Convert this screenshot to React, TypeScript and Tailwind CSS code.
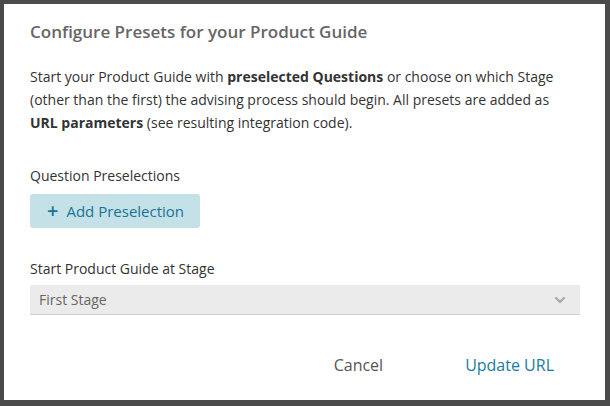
import { ChevronDown } from "lucide-react";

export default function App() {
  return (
    <div
      className="h-[406px] w-[610px] bg-[#4b4b4b] p-1"
      style={{ fontFamily: '"Open Sans", "Liberation Sans", sans-serif' }}
    >
      <div className="flex h-[396px] w-[601px] flex-col bg-white px-[26px]">
        {/* TITULO */}
        <h2 className="mt-[15px] text-[17px] font-semibold leading-[26px] text-[#666]">
          Configure Presets for your Product Guide
        </h2>

        {/* DESCRIPCION */}
        <p className="mt-[20px] text-[14px] leading-[23px] text-[#333]">
          Start your Product Guide with <b>preselected Questions</b> or choose on which Stage
          (other than the first) the advising process should begin. All presets are added as{" "}
          <b>URL parameters</b> (see resulting integration code).
        </p>

        {/* PRESELECCIONES */}
        <p className="mt-[30px] text-[14px] leading-[24px] text-[#333]">Question Preselections</p>
        <button className="mt-[6px] flex h-[34px] w-[170px] items-center gap-[8px] whitespace-nowrap rounded-[3px] bg-[#c4e1e8] pl-[17px] text-[15px] text-[#1b7396]">
          <span className="text-[20px] font-semibold leading-none">+</span>
          <span>Add Preselection</span>
        </button>

        {/* ETAPA */}
        <p className="mt-[29px] text-[14px] leading-[24px] text-[#333]">Start Product Guide at Stage</p>
        <div className="mt-[4px] flex h-[30px] w-[550px] items-center justify-between border-b border-[#d0d0d0] bg-[#ebebeb] pl-[9px] pr-[12px] text-[14px] text-[#666]">
          First Stage
          <ChevronDown size={16} strokeWidth={3.5} className="text-[#aaa]" />
        </div>

        {/* ACCIONES */}
        <div className="mt-[38px] flex items-center justify-end gap-[82px] pr-[25px] text-[16px]">
          <button className="text-[#555]">Cancel</button>
          <button className="text-[#1a7ba2]">Update URL</button>
        </div>
      </div>
    </div>
  );
}
